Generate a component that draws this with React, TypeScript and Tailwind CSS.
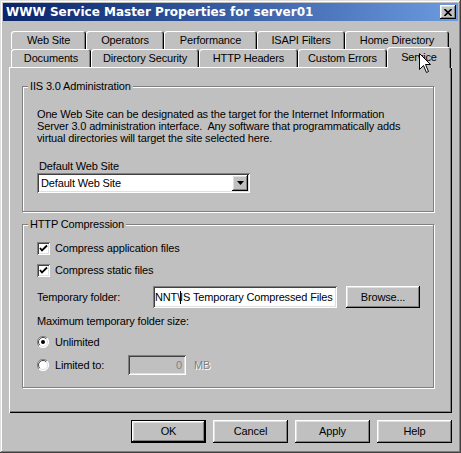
import React from 'react';

// classic 3d edges
const raised =
  'bg-[#c0c0c0] shadow-[inset_-1px_-1px_0_#000,inset_1px_1px_0_#fff,inset_-2px_-2px_0_#808080,inset_2px_2px_0_#dfdfdf]';
const sunken =
  'shadow-[inset_1px_1px_0_#808080,inset_-1px_-1px_0_#fff,inset_2px_2px_0_#404040,inset_-2px_-2px_0_#dfdfdf]';
const tabEdge =
  'rounded-t-[3px] shadow-[inset_1px_1px_0_#fff,inset_-1px_0_0_#000,inset_-2px_0_0_#808080]';

const topTabs = [
  { label: 'Web Site', w: 'w-[75px]' },
  { label: 'Operators', w: 'w-[78px]' },
  { label: 'Performance', w: 'w-[93px]' },
  { label: 'ISAPI Filters', w: 'w-[88px]' },
  { label: 'Home Directory', w: 'w-[104px]' },
];

const bottomTabs = [
  { label: 'Documents', w: 'w-[80px]' },
  { label: 'Directory Security', w: 'w-[108px]' },
  { label: 'HTTP Headers', w: 'w-[99px]' },
  { label: 'Custom Errors', w: 'w-[89px]' },
];

const Group = ({ title, className, children }: { title: string; className: string; children: React.ReactNode }) => (
  <div className={`relative border border-[#808080] shadow-[1px_1px_0_#fff,inset_1px_1px_0_#fff] ${className}`}>
    <span className="absolute left-[5px] -top-[8px] px-[2px] bg-[#c0c0c0] leading-[14px]">{title}</span>
    {children}
  </div>
);

const CheckBox = () => (
  <div className={`w-[13px] h-[13px] bg-white ${sunken} flex items-center justify-center`}>
    <svg width="9" height="9" viewBox="0 0 9 9">
      <path d="M1 4 L3 6.5 L8 1.5" fill="none" stroke="#000" strokeWidth="1.8" />
    </svg>
  </div>
);

const Radio = ({ on }: { on?: boolean }) => (
  <svg width="12" height="12" viewBox="0 0 12 12">
    <circle cx="6" cy="6" r="5.5" fill="#fff" />
    <path d="M10 2 A5.5 5.5 0 0 0 2 10" fill="none" stroke="#808080" strokeWidth="1" />
    <path d="M9.2 2.8 A4.5 4.5 0 0 0 2.8 9.2" fill="none" stroke="#404040" strokeWidth="1" />
    <path d="M2 10 A5.5 5.5 0 0 0 10 2" fill="none" stroke="#fff" strokeWidth="1" />
    <path d="M2.8 9.2 A4.5 4.5 0 0 0 9.2 2.8" fill="none" stroke="#dfdfdf" strokeWidth="1" />
    {on && <circle cx="6" cy="6" r="2" fill="#000" />}
  </svg>
);

const Button = ({ label, def }: { label: string; def?: boolean }) => (
  <div className={`w-[75px] h-[23px] flex items-center justify-center ${def ? 'border border-black' : ''}`}>
    <div className={`w-full h-full flex items-center justify-center ${raised}`}>{label}</div>
  </div>
);

export default function App() {
  return (
    <div
      className="relative w-[461px] h-[453px] p-[3px] bg-[#c0c0c0] text-black text-[11px] leading-[13px] tracking-[-0.15px] shadow-[inset_-1px_-1px_0_#404040,inset_1px_1px_0_#dfdfdf,inset_-2px_-2px_0_#808080,inset_2px_2px_0_#fff]"
      style={{ fontFamily: '"Liberation Sans", Arial, sans-serif' }}
    >
      {/* title bar */}
      <div className="h-[18px] flex items-center justify-between pl-[3px] pr-[2px] bg-linear-to-r from-[#0a246a] to-[#6d9be0]">
        <span
          className="text-white font-bold text-[12px] tracking-normal"
          style={{ fontFamily: '"DejaVu Sans", Verdana, sans-serif' }}
        >
          WWW Service Master Properties for server01
        </span>
        <div className={`w-[16px] h-[14px] flex items-center justify-center ${raised}`}>
          <svg width="8" height="7" viewBox="0 0 8 7">
            <path d="M0.5 0 L7.5 7 M7.5 0 L0.5 7" stroke="#000" strokeWidth="1.6" />
          </svg>
        </div>
      </div>

      {/* tabs */}
      <div className="mt-[10px] ml-[8px] flex">
        {topTabs.map((t) => (
          <div key={t.label} className={`h-[18px] ${t.w} flex items-center justify-center ${tabEdge}`}>
            {t.label}
          </div>
        ))}
      </div>
      <div className="ml-[8px] h-[18px] flex items-end">
        {bottomTabs.map((t) => (
          <div key={t.label} className={`h-[18px] ${t.w} flex items-center justify-center ${tabEdge}`}>
            {t.label}
          </div>
        ))}
        <div className={`relative z-10 w-[64px] h-[21px] -mb-[1px] bg-[#c0c0c0] flex items-center justify-center pb-[1px] ${tabEdge}`}>
          Service
        </div>
      </div>

      {/* tab page */}
      <div className="ml-[6px] w-[443px] h-[346px] pt-[19px] pl-[13px] shadow-[inset_1px_1px_0_#fff,inset_-1px_-1px_0_#000,inset_-2px_-2px_0_#808080]">
        <Group title="IIS 3.0 Administration" className="w-[412px] h-[126px] pl-[14px]">
          <p className="mt-[21px] leading-[12px] whitespace-pre">
            {'One Web Site can be designated as the target for the Internet Information\nServer 3.0 administration interface.  Any software that programmatically adds\nvirtual directories will target the site selected here.'}
          </p>
          <div className="mt-[16px] pl-[2px] h-[13px]">Default Web Site</div>
          <div className={`w-[213px] h-[20px] bg-white flex items-center justify-between pl-[4px] pr-[2px] ${sunken}`}>
            <span>Default Web Site</span>
            <div className={`w-[16px] h-[16px] flex items-center justify-center ${raised}`}>
              <svg width="7" height="4" viewBox="0 0 7 4">
                <path d="M0 0 H7 L3.5 4 Z" fill="#000" />
              </svg>
            </div>
          </div>
        </Group>

        <Group title="HTTP Compression" className="mt-[12px] w-[412px] h-[164px] pl-[14px]">
          <div className="mt-[14px] h-[19px] flex items-center gap-[5px]">
            <CheckBox />
            <span>Compress application files</span>
          </div>
          <div className="mt-[3px] h-[19px] flex items-center gap-[5px]">
            <CheckBox />
            <span>Compress static files</span>
          </div>
          <div className="mt-[6px] h-[22px] flex items-center">
            <span className="w-[116px]">Temporary folder:</span>
            <div className={`w-[184px] h-[22px] bg-white flex items-center pl-[2px] overflow-hidden whitespace-nowrap ${sunken}`}>
              NNT\<span className="inline-block w-px h-[13px] bg-black -mr-px" />IS Temporary Compressed Files
            </div>
            <div className="ml-[9px] w-[74px] h-[22px]">
              <div className={`w-full h-full flex items-center justify-center ${raised}`}>Browse...</div>
            </div>
          </div>
          <div className="mt-[6px] h-[14px] flex items-center">Maximum temporary folder size:</div>
          <div className="mt-[5px] h-[18px] flex items-center gap-[6px]">
            <Radio on />
            <span>Unlimited</span>
          </div>
          <div className="mt-[4px] h-[20px] flex items-center">
            <Radio />
            <span className="ml-[6px] w-[73px]">Limited to:</span>
            <div className={`w-[58px] h-[20px] bg-[#c0c0c0] flex items-center justify-end pr-[4px] text-[#808080] ${sunken}`}>
              0
            </div>
            <span className="ml-[8px] text-[#808080] [text-shadow:1px_1px_0_#fff]">MB</span>
          </div>
        </Group>
      </div>

      {/* buttons */}
      <div className="mt-[7px] pr-[6px] flex justify-end gap-[7px]">
        <Button label="OK" def />
        <Button label="Cancel" />
        <Button label="Apply" />
        <Button label="Help" />
      </div>

      {/* mouse pointer over the Service tab */}
      <svg className="absolute z-20 left-[419px] top-[53px]" width="13" height="21" viewBox="0 0 13 21">
        <path
          d="M0.5 0.5 L0.5 16.5 L4.5 12.5 L7.5 19.5 L9.5 18.5 L6.5 11.5 L11.5 11.5 Z"
          fill="#fff"
          stroke="#000"
          strokeWidth="1"
        />
      </svg>
    </div>
  );
}
